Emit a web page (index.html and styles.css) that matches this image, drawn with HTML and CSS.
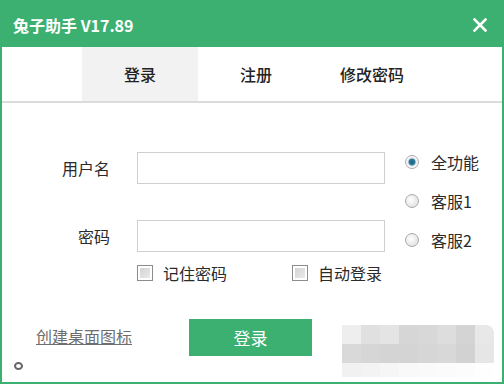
FILE: index.html
```html
<!DOCTYPE html>
<html lang="zh-CN">
<head>
  <meta charset="UTF-8" />
  <title>兔子助手 V17.89</title>
  <link rel="stylesheet" href="styles.css">
</head>
<body>
  <div class="window">
    <!-- Title bar -->
    <div class="titlebar">
      <span class="title">兔子助手 V17.89</span>
      <svg class="close" width="14" height="14" viewBox="0 0 14 14">
        <path d="M1.5 1.5 L12.5 12.5 M12.5 1.5 L1.5 12.5" stroke="#fff" stroke-width="2.6" stroke-linecap="square" />
      </svg>
    </div>

    <!-- Tabs -->
    <div class="tabs">
      <button class="active">登录</button>
      <button>注册</button>
      <button>修改密码</button>
    </div>

    <!-- Login form -->
    <div class="form-area">
      <div class="fields">
        <div class="row">
          <label>用户名</label>
          <input type="text" />
        </div>
        <div class="row">
          <label>密码</label>
          <input type="password" />
        </div>
        <div class="checks">
          <span class="check"><span class="box"></span>记住密码</span>
          <span class="check"><span class="box"></span>自动登录</span>
        </div>
      </div>
      <div class="modes">
        <span class="mode"><span class="radio on"></span>全功能</span>
        <span class="mode"><span class="radio"></span>客服1</span>
        <span class="mode"><span class="radio"></span>客服2</span>
      </div>
    </div>

    <!-- Bottom row -->
    <div class="bottom">
      <div class="side">
        <a class="link">创建桌面图标</a>
        <span class="dot"></span>
      </div>
      <button class="login-btn">登录</button>
      <div class="mosaic">
        <i style="background:#eeeeee"></i><i style="background:#e0e0e0"></i><i style="background:#e4e4e4"></i><i style="background:#d6d6d6"></i><i style="background:#d8d8d8"></i><i style="background:#dddddd"></i><i style="background:#d4d4d4"></i><i style="background:#e8e8e8"></i>
        <i style="background:#d9d9d9"></i><i style="background:#d6d6d6"></i><i style="background:#d4d4d4"></i><i style="background:#d4d4d4"></i><i style="background:#d6d6d6"></i><i style="background:#d8d8d8"></i><i style="background:#d2d2d2"></i><i style="background:#e6e6e6"></i>
        <i style="background:#f1f1f1"></i><i style="background:#f3f3f3"></i><i style="background:#f6f6f6"></i><i style="background:#f9f9f9"></i><i style="background:#fafafa"></i><i style="background:#fbfbfb"></i><i style="background:#fcfcfc"></i><i style="background:#fefefe"></i>
      </div>
    </div>
  </div>
</body>
</html>
```

FILE: styles.css
```css
/* Basic reset */
body {
  margin: 0;
  padding: 0;
  background: #fff;
  font-family: "Microsoft YaHei", "Noto Sans CJK SC", "Noto Sans", sans-serif;
  color: #2a2a2a;
}
/* Window frame */
.window {
  box-sizing: border-box;
  width: 504px;
  height: 384px;
  border: 2px solid #3cb070;
  border-top: none;
  background: #fff;
  overflow: hidden;
}
.titlebar {
  height: 47px;
  margin: 0 -2px;
  padding: 0 17px 0 13px;
  background: #3cb070;
  display: flex;
  align-items: center;
  justify-content: space-between;
}
.title {
  color: #fff;
  font-size: 16px;
  font-weight: bold;
  padding-top: 2px;
}
.close {
  margin-top: 2px;
}
/* Tabs */
.tabs {
  height: 54px;
  padding-left: 80px;
  border-bottom: 2px solid #dcdcdc;
  display: flex;
}
.tabs button {
  width: 116px;
  border: none;
  background: none;
  font-family: inherit;
  font-size: 16px;
  font-weight: 500;
  color: #222;
  padding: 0;
}
.tabs button.active {
  background: #f2f2f2;
}
/* Form area */
.form-area {
  display: flex;
  padding-top: 49px;
}
.fields {
  width: 383px;
  flex-shrink: 0;
}
.row {
  display: flex;
  align-items: center;
  height: 32px;
  margin-bottom: 36px;
}
.row label {
  width: 108px;
  text-align: right;
  font-size: 16px;
  margin-right: 27px;
}
.row input {
  box-sizing: border-box;
  width: 248px;
  height: 32px;
  border: 1px solid #cfcfcf;
  margin: 0;
  outline: none;
}
.checks {
  display: flex;
  margin-top: -25px;
  padding-left: 135px;
  height: 20px;
  align-items: center;
}
.check {
  display: flex;
  align-items: center;
  font-size: 16px;
  white-space: nowrap;
  flex-shrink: 0;
}
.check:first-child {
  width: 155px;
}
.box {
  box-sizing: border-box;
  width: 16px;
  height: 16px;
  border: 1px solid #8c8c8c;
  box-shadow: inset 0 0 0 2px #fff;
  background: linear-gradient(135deg, #cfcfcf, #eeeeee);
  margin-right: 10px;
}
/* Mode radios */
.modes {
  display: flex;
  flex-direction: column;
  gap: 19px;
  padding-left: 20px;
}
.mode {
  display: flex;
  align-items: center;
  height: 20px;
  font-size: 16px;
  white-space: nowrap;
}
.radio {
  box-sizing: border-box;
  width: 14px;
  height: 14px;
  border-radius: 50%;
  border: 1px solid #a9a9a9;
  background: radial-gradient(circle at 40% 40%, #ffffff, #d9d9d9);
  margin-right: 12px;
}
.radio.on {
  background: radial-gradient(circle, #1f5f7e 0, #2f7fa0 3px, #e8e8e8 4px, #ffffff 6px);
}
/* Bottom row */
.bottom {
  display: flex;
  align-items: flex-start;
  margin-top: 36px;
}
.side {
  width: 187px;
  display: flex;
  flex-direction: column;
}
.link {
  margin-left: 34px;
  margin-top: 5px;
  font-size: 16px;
  color: #6e6e6e;
  text-decoration: underline;
}
.dot {
  box-sizing: border-box;
  width: 9px;
  height: 8px;
  border: 2px solid #666;
  border-radius: 50%;
  margin-left: 12px;
  margin-top: 14px;
}
.login-btn {
  width: 123px;
  height: 37px;
  border: none;
  background: #3cb070;
  color: #fff;
  font-family: inherit;
  font-size: 17px;
  padding: 0;
}
.mosaic {
  margin-left: 30px;
  margin-top: 6px;
  display: grid;
  grid-template-columns: repeat(8, 19px);
  grid-template-rows: 19px 19px 14px;
  border-radius: 0 8px 8px 0;
  overflow: hidden;
}
```
